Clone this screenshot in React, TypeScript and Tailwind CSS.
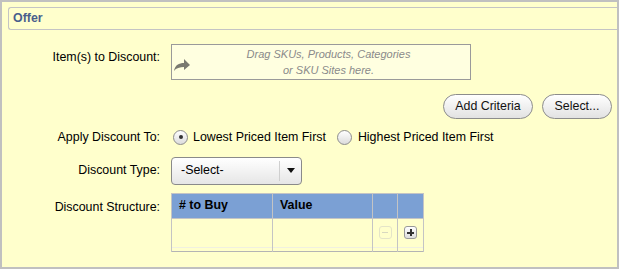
import React, { useState } from "react";

const Radio = ({ checked, onClick }: { checked: boolean; onClick: () => void }) => (
  <span
    onClick={onClick}
    className="flex h-[15px] w-[15px] items-center justify-center rounded-full border border-[#8c8c8c] bg-gradient-to-b from-white to-[#dcdcdc] cursor-pointer"
  >
    {checked && <span className="h-[4px] w-[4px] rounded-full bg-[#333]" />}
  </span>
);

const App: React.FC = () => {
  const [applyTo, setApplyTo] = useState("lowest");

  return (
    <div
      className="h-[269px] w-[619px] border-2 border-[#c0c0c0] bg-[#ffffcc] text-[12.4px] text-black"
      style={{ fontFamily: '"Liberation Sans", Arial, sans-serif' }}
    >
      <div className="ml-[6px] mt-[5px] flex h-[23px] items-center rounded-l-[3px] border-y border-l border-[#c4c4c4] pl-[4px]">
        <span className="text-[12.4px] font-bold text-[#4a5e8c]">Offer</span>
      </div>

      <div className="mt-[14px] flex items-start">
        <div className="w-[158px] pt-[4px] text-right">Item(s) to Discount:</div>
        <div className="ml-[11px] flex h-[36px] w-[300px] items-center border border-[#9a9a9a] bg-[#ffffe0]">
          <svg width="18" height="14" viewBox="0 0 18 14" className="ml-[1px] mt-[6px] shrink-0">
            <path d="M1 13 C2 7 6 5 11 5 L11 1 L17 7 L11 12 L11 9 C7 9 3 10 1 13 Z" fill="#7a7a70" />
          </svg>
          <div className="flex-1 pr-[4px] text-center text-[11px] italic leading-[16px] text-[#8a8a8a]">
            Drag SKUs, Products, Categories
            <br />
            or SKU Sites here.
          </div>
        </div>
      </div>

      <div className="mt-[14px] flex justify-end gap-[9px] pr-[5px]">
        <button className="h-[25px] w-[90px] rounded-full border border-[#8c8c8c] bg-gradient-to-b from-white to-[#e2e2e2] text-[12.4px] text-[#111]">
          Add Criteria
        </button>
        <button className="h-[25px] w-[70px] rounded-full border border-[#8c8c8c] bg-gradient-to-b from-white to-[#e2e2e2] text-[12.4px] text-[#111]">
          Select...
        </button>
      </div>

      <div className="mt-[9px] flex items-center">
        <div className="w-[158px] text-right">Apply Discount To:</div>
        <div className="ml-[13px] flex items-center">
          <Radio checked={applyTo === "lowest"} onClick={() => setApplyTo("lowest")} />
          <span className="ml-[5px]">Lowest Priced Item First</span>
          <span className="ml-[11px]">
            <Radio checked={applyTo === "highest"} onClick={() => setApplyTo("highest")} />
          </span>
          <span className="ml-[6px]">Highest Priced Item First</span>
        </div>
      </div>

      <div className="mt-[10px] flex items-center">
        <div className="w-[158px] text-right">Discount Type:</div>
        <div className="ml-[11px] flex h-[28px] w-[131px] items-center rounded-[4px] border border-[#8a8a8a] bg-gradient-to-b from-white to-[#e6e6e6]">
          <span className="flex-1 pl-[9px]">-Select-</span>
          <span className="h-[20px] w-px bg-[#cfcfcf]" />
          <span className="flex w-[21px] justify-center">
            <svg width="8" height="5" viewBox="0 0 8 5">
              <path d="M0 0 L8 0 L4 5 Z" fill="#111" />
            </svg>
          </span>
        </div>
      </div>

      <div className="mt-[8px] flex items-start">
        <div className="w-[158px] pt-[5px] text-right">Discount Structure:</div>
        <table className="ml-[11px] w-[253px] border-collapse border border-[#b4b4b4]">
          <thead>
            <tr className="h-[25px] bg-[#7ba0d4] text-left">
              <th className="w-[101px] border border-[#c4c4c4] pl-[7px] font-bold">
                # to Buy
              </th>
              <th className="w-[100px] border border-[#c4c4c4] pl-[7px] font-bold">
                Value
              </th>
              <th className="w-[25px] border border-[#c4c4c4]" />
              <th className="w-[26px] border border-[#c4c4c4]" />
            </tr>
          </thead>
          <tbody>
            <tr className="h-[29px]">
              <td className="border-x border-[#c4c4c4]" />
              <td className="border-x border-[#c4c4c4]" />
              <td className="border-x border-[#c4c4c4]">
                <div className="flex justify-center">
                  <span className="flex h-[13px] w-[13px] items-center justify-center rounded-[3px] border border-[#e4e4c8]">
                    <span className="h-px w-[6px] bg-[#d8d8c0]" />
                  </span>
                </div>
              </td>
              <td className="border-x border-[#c4c4c4]">
                <div className="flex justify-center">
                  <span className="relative flex h-[13px] w-[13px] items-center justify-center rounded-[3px] border border-[#9a9a9a] bg-gradient-to-b from-white to-[#dedede]">
                    <span className="absolute h-[2px] w-[7px] bg-[#333]" />
                    <span className="absolute h-[7px] w-[2px] bg-[#333]" />
                  </span>
                </div>
              </td>
            </tr>
            <tr className="h-[4px]">
              <td className="border-x border-t border-[#f0f0e0] border-x-[#c4c4c4]" />
              <td className="border-x border-t border-[#f0f0e0] border-x-[#c4c4c4]" />
              <td className="border-x border-t border-[#f0f0e0] border-x-[#c4c4c4]" />
              <td className="border-x border-t border-[#f0f0e0] border-x-[#c4c4c4]" />
            </tr>
          </tbody>
        </table>
      </div>
    </div>
  );
};

export default App;
